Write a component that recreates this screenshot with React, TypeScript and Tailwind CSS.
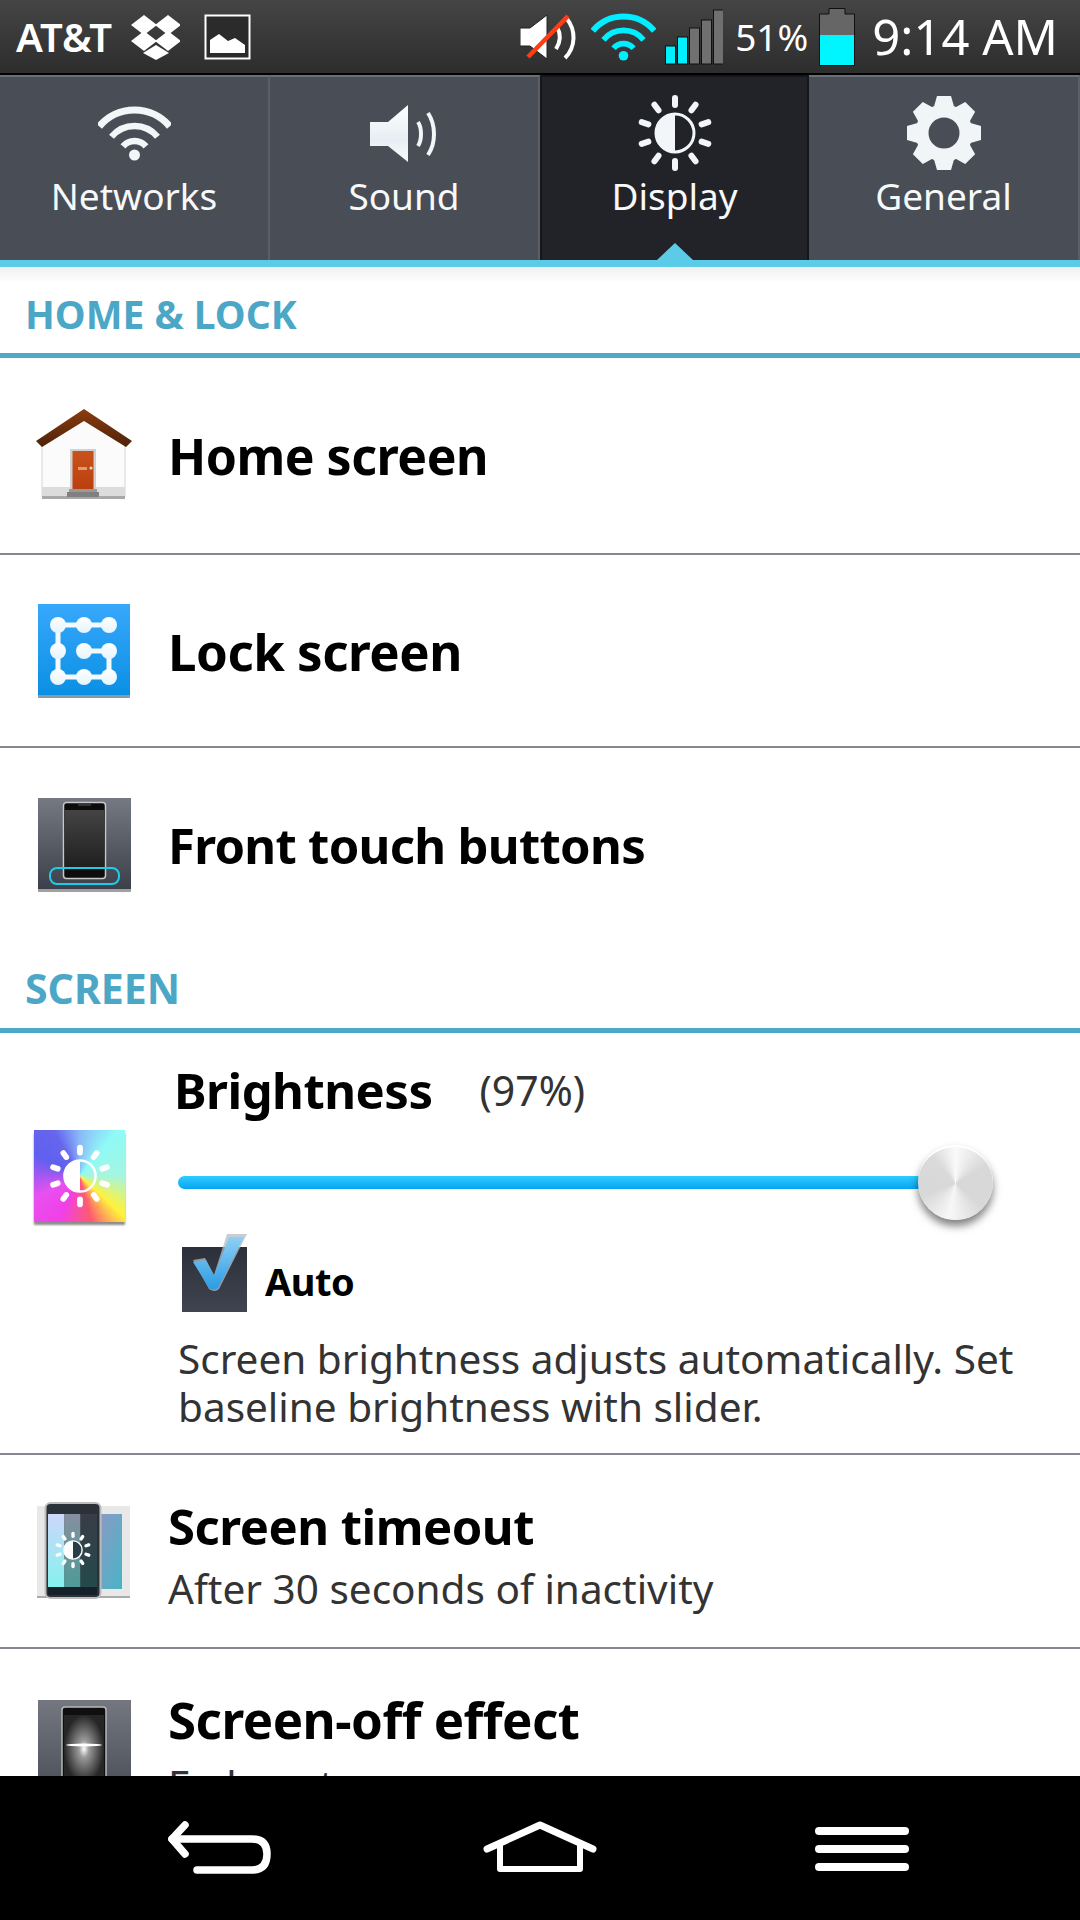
import React from "react";

const arc = (cx: number, cy: number, r: number, a = 42) => {
  const t = (a * Math.PI) / 180;
  const dx = r * Math.sin(t);
  const dy = r * Math.cos(t);
  return `M${cx - dx} ${cy - dy}A${r} ${r} 0 0 1 ${cx + dx} ${cy - dy}`;
};

function Wifi({ w, h, color }: { w: number; h: number; color: string }) {
  return (
    <svg width={w} height={h} viewBox="0 0 73 55" fill="none" stroke={color}>
      <path d={arc(36.5, 50, 46, 50)} strokeWidth={7} />
      <path d={arc(36.5, 50, 30, 50)} strokeWidth={6.5} />
      <path d={arc(36.5, 50, 15, 50)} strokeWidth={6.5} />
      <circle cx={36.5} cy={49} r={5.5} fill={color} stroke="none" />
    </svg>
  );
}

function SunGlyph({ fill, inner, ray = 13, stroke = 3 }: { fill: string; inner: string; ray?: number; stroke?: number }) {
  const rays = Array.from({ length: 10 }, (_, i) => i * 36);
  return (
    <g>
      {rays.map((a) => (
        <rect key={a} x={-stroke} y={-38} width={stroke * 2} height={ray} rx={stroke} fill={fill} transform={`rotate(${a})`} />
      ))}
      <circle r={19} fill={inner} stroke={fill} strokeWidth={3} />
      <path d="M0 -19A19 19 0 0 0 0 19Z" fill={fill} />
    </g>
  );
}

function TabSun() {
  return (
    <svg width={78} height={78} viewBox="-39 -39 78 78">
      <SunGlyph fill="#f2f6f8" inner="#212329" />
    </svg>
  );
}

function TabGear() {
  const teeth = Array.from({ length: 8 }, (_, i) => i * 45);
  return (
    <svg width={74} height={74} viewBox="-37 -37 74 74">
      <g fill="#f1f5f8">
        {teeth.map((a) => (
          <path key={a} d="M-7 -37H7L11 -23H-11Z" transform={`rotate(${a})`} />
        ))}
        <circle r={22} fill="none" stroke="#f1f5f8" strokeWidth={13} />
      </g>
    </svg>
  );
}

function TabSpeaker() {
  return (
    <svg width={68} height={57} viewBox="0 0 68 57" fill="none">
      <defs>
        <linearGradient id="spk" x1="0" y1="0" x2="0" y2="1">
          <stop offset="0" stopColor="#ffffff" />
          <stop offset="0.6" stopColor="#e6eef3" />
          <stop offset="1" stopColor="#f8fafb" />
        </linearGradient>
      </defs>
      <path d="M0 17H18L38 0V57L18 41H0Z" fill="url(#spk)" />
      <path d="M48 17C52 23 52 35 48 41" stroke="#f2f6f8" strokeWidth={4} />
      <path d="M58 8C66 20 66 38 58 50" stroke="#f2f6f8" strokeWidth={4} />
    </svg>
  );
}

function Dropbox() {
  const d = (x: number, y: number) => `${x},${y - 10} ${x + 13},${y} ${x},${y + 10} ${x - 13},${y}`;
  return (
    <svg width={49} height={46} viewBox="0 0 49 46" fill="#fff">
      <polygon points={d(13, 11)} />
      <polygon points={d(37, 11)} />
      <polygon points={d(13, 27)} />
      <polygon points={d(37, 27)} />
      <polygon points="25,31 38,39 25,46 12,39" />
    </svg>
  );
}

function Picture() {
  return (
    <svg width={47} height={46} viewBox="0 0 47 46">
      <rect x={1.5} y={1.5} width={44} height={43} fill="#2b2b2b" stroke="#fff" strokeWidth={2} />
      <path d="M6 39V26L15 20L24 27L31 24L41 31V39Z" fill="#fff" />
    </svg>
  );
}

function MutedSpeaker() {
  return (
    <svg width={58} height={48} viewBox="0 0 58 48" fill="none">
      <path d="M0 15H10L27 2V46L10 33H0Z" fill="#fff" stroke="#222" />
      <path d="M37 14C41 21 41 28 36 36" stroke="#fff" strokeWidth={4} />
      <path d="M47 6C56 17 56 34 45 45" stroke="#fff" strokeWidth={4} />
      <path d="M8 44L48 3" stroke="#ff3d14" strokeWidth={4.5} />
    </svg>
  );
}

function Signal() {
  const bars = [
    { x: 0, y: 37, c: "#00f0ff" },
    { x: 12, y: 28, c: "#00f0ff" },
    { x: 24, y: 19, c: "#707070" },
    { x: 36, y: 11, c: "#707070" },
    { x: 48, y: 1, c: "#707070" },
  ];
  return (
    <svg width={58} height={56} viewBox="0 0 58 56">
      {bars.map((b) => (
        <rect key={b.x} x={b.x + 0.5} y={b.y} width={10} height={55 - b.y} fill={b.c} stroke="#111" />
      ))}
    </svg>
  );
}

function Battery() {
  return (
    <svg width={36} height={58} viewBox="0 0 36 58">
      <path d="M10 .5H26V6H35.5V57.5H.5V6H10Z" fill="#666" stroke="#111" />
      <rect x={1} y={27} width={34} height={30} fill="#00f6ff" />
    </svg>
  );
}

function HomeIcon() {
  return (
    <svg width={96} height={90} viewBox="0 0 96 90" className="mb-[4px]">
      <defs>
        <linearGradient id="roof" x1="0" y1="0" x2="0" y2="1">
          <stop offset="0" stopColor="#8a3d10" />
          <stop offset="1" stopColor="#4d2208" />
        </linearGradient>
        <linearGradient id="door" x1="0" y1="0" x2="0" y2="1">
          <stop offset="0" stopColor="#c9521b" />
          <stop offset="1" stopColor="#bb3f0e" />
        </linearGradient>
      </defs>
      <path d="M6 34L48 8L89 34V88H6Z" fill="#fbfbfb" stroke="#d5d5d5" />
      <rect x={6} y={78} width={83} height={10} fill="#dcdcdc" />
      <rect x={6} y={87} width={83} height={3} fill="#a8a8a8" />
      <path d="M0 32L48 0L96 32L90 38L48 12L6 38Z" fill="url(#roof)" />
      <rect x={34} y={40} width={26} height={43} fill="#d0d0d0" />
      <rect x={36.5} y={42} width={21} height={38} fill="url(#door)" />
      <rect x={42} y={58} width={9} height={3} fill="#dca070" />
      <circle cx={55} cy={59} r={1.5} fill="#ddd" />
      <rect x={33} y={80} width={28} height={3} fill="#999" />
      <rect x={31} y={83} width={32} height={5} fill="#808080" />
    </svg>
  );
}

function LockIcon() {
  const pts = [
    [20, 21], [46, 21], [71, 21],
    [20, 47], [46, 47], [71, 47],
    [20, 73], [46, 73], [71, 73],
  ];
  return (
    <svg width={92} height={94} viewBox="0 0 92 94">
      <defs>
        <linearGradient id="lockBg" x1="0" y1="0" x2="0" y2="1">
          <stop offset="0" stopColor="#38a8fb" />
          <stop offset="1" stopColor="#0a8fe4" />
        </linearGradient>
        <linearGradient id="lockDot" x1="0" y1="0" x2="0" y2="1">
          <stop offset="0" stopColor="#ffffff" />
          <stop offset="1" stopColor="#e4f4fd" />
        </linearGradient>
      </defs>
      <rect width={92} height={92} fill="url(#lockBg)" />
      <rect y={91} width={92} height={3} fill="#8a9aa5" />
      <path d="M71 21H20V73H71V47H46" fill="none" stroke="#f2fafe" strokeWidth={5} />
      {pts.map(([x, y]) => (
        <circle key={`${x}-${y}`} cx={x} cy={y} r={8} fill="url(#lockDot)" />
      ))}
    </svg>
  );
}

function FrontIcon() {
  return (
    <svg width={93} height={94} viewBox="0 0 93 94">
      <defs>
        <linearGradient id="frontBg" x1="0" y1="0" x2="0" y2="1">
          <stop offset="0" stopColor="#757982" />
          <stop offset="1" stopColor="#3b3f49" />
        </linearGradient>
        <linearGradient id="frontScreen" x1="0" y1="0" x2="0" y2="1">
          <stop offset="0" stopColor="#444" />
          <stop offset="1" stopColor="#1f1f1f" />
        </linearGradient>
      </defs>
      <rect width={93} height={92} fill="url(#frontBg)" />
      <rect y={91} width={93} height={3} fill="#a0a0a0" />
      <rect x={25.5} y={4.5} width={42} height={76} rx={3} fill="#0c0c0c" stroke="#c8c8c8" strokeWidth={1.5} />
      <rect x={27} y={12} width={39} height={58} fill="url(#frontScreen)" />
      <rect x={40} y={6} width={13} height={2} fill="#333" />
      <rect x={12} y={70} width={69} height={16} rx={7} fill="none" stroke="#1fcbea" strokeWidth={2} />
    </svg>
  );
}

function BrightIcon() {
  return (
    <div className="flex h-[92px] w-[91px] items-center justify-center bg-[conic-gradient(#8ab8f8_0deg,#8ffaf6_40deg,#a5f5e0_90deg,#fff23c_132deg,#ff5a70_165deg,#f040e8_205deg,#e850f0_245deg,#6060f0_295deg,#6565ee_330deg,#8ab8f8_360deg)] shadow-[0_3px_2px_rgba(0,0,0,0.45)]">
      <svg width={64} height={66} viewBox="-39 -39 78 78">
        <SunGlyph fill="#ffffff" inner="transparent" ray={13} stroke={3.5} />
      </svg>
    </div>
  );
}

function CheckIcon() {
  return (
    <svg width={66} height={80} viewBox="0 0 66 80">
      <defs>
        <linearGradient id="boxBg" x1="0" y1="0" x2="0" y2="1">
          <stop offset="0" stopColor="#2c303a" />
          <stop offset="1" stopColor="#3f4450" />
        </linearGradient>
        <linearGradient id="chk" x1="0" y1="0" x2="0" y2="1">
          <stop offset="0" stopColor="#8fd0f4" />
          <stop offset="1" stopColor="#2b9be4" />
        </linearGradient>
      </defs>
      <rect y={13} width={65} height={65} fill="url(#boxBg)" />
      <path d="M44 1H64L36 56Q32 60 26 56L10 27L22 25L31 42Z" fill="#b5bcc4" opacity={0.75} transform="translate(1 -1)" />
      <path d="M47 3H62L36 54Q32 57 27 54L11 28L24 26L32 42Z" fill="url(#chk)" />
    </svg>
  );
}

function TimeoutIcon() {
  return (
    <svg width={96} height={98} viewBox="0 0 96 98">
      <defs>
        <linearGradient id="sideShot" x1="0" y1="0" x2="1" y2="1">
          <stop offset="0" stopColor="#8f98c4" />
          <stop offset="1" stopColor="#47b5c4" />
        </linearGradient>
        <linearGradient id="col1" x1="0" y1="0" x2="0" y2="1">
          <stop offset="0" stopColor="#cdd6fa" />
          <stop offset="1" stopColor="#85f2ee" />
        </linearGradient>
        <linearGradient id="col2" x1="0" y1="0" x2="0" y2="1">
          <stop offset="0" stopColor="#858fa0" />
          <stop offset="1" stopColor="#4f9a98" />
        </linearGradient>
        <linearGradient id="col3" x1="0" y1="0" x2="0" y2="1">
          <stop offset="0" stopColor="#383c47" />
          <stop offset="1" stopColor="#244a4c" />
        </linearGradient>
      </defs>
      <rect y={4} width={93} height={91} fill="#e8e8e8" />
      <rect y={94} width={93} height={2} fill="#aaa" />
      <rect x={60} y={12} width={25} height={75} fill="url(#sideShot)" />
      <rect x={8.5} y={1} width={55} height={95} rx={5} fill="#2b3138" stroke="#bdbdbd" strokeWidth={2} />
      <rect x={11} y={12} width={16.5} height={73} fill="url(#col1)" />
      <rect x={27.5} y={12} width={16} height={73} fill="url(#col2)" />
      <rect x={43.5} y={12} width={16.5} height={73} fill="url(#col3)" />
      <rect x={11} y={85} width={49} height={8} fill="#15202a" />
      <g transform="translate(36 48) scale(0.48)">
        <SunGlyph fill="#ffffff" inner="#2a3c46" ray={13} stroke={3.5} />
      </g>
    </svg>
  );
}

function ScreenOffIcon() {
  return (
    <svg width={93} height={94} viewBox="0 0 93 94" className="self-start">
      <defs>
        <linearGradient id="offBg" x1="0" y1="0" x2="0" y2="1">
          <stop offset="0" stopColor="#74777f" />
          <stop offset="1" stopColor="#4a4e58" />
        </linearGradient>
        <radialGradient id="glow" cx="0.5" cy="0.5" r="0.5">
          <stop offset="0" stopColor="#ffffff" />
          <stop offset="0.25" stopColor="#9a9a9a" />
          <stop offset="1" stopColor="#262626" />
        </radialGradient>
      </defs>
      <rect width={93} height={94} fill="url(#offBg)" />
      <rect x={24} y={7} width={44} height={87} rx={3} fill="#0f0f0f" stroke="#b8b8b8" strokeWidth={1.5} />
      <rect x={26} y={15} width={40} height={68} fill="url(#glow)" />
      <ellipse cx={46} cy={45} rx={18} ry={1.5} fill="#fff" />
    </svg>
  );
}

function BackIcon() {
  return (
    <svg width={104} height={54} viewBox="0 0 104 54" fill="none" stroke="#fff" strokeWidth={7.5} strokeLinecap="round" strokeLinejoin="round">
      <path d="M17 4L4 18L17 33" />
      <path d="M4 18H84Q99 18 99 33Q99 49 84 49H29" />
    </svg>
  );
}

function NavHome() {
  return (
    <svg width={114} height={52} viewBox="0 0 114 52" fill="none" stroke="#fff" strokeLinecap="round" strokeLinejoin="round">
      <path d="M4 28L57 4L110 28" strokeWidth={7} />
      <path d="M17 24V48H97V24" strokeWidth={6} />
    </svg>
  );
}

type TabProps = { label: string; icon: React.ReactNode; active?: boolean };

function Tab({ label, icon, active }: TabProps) {
  return (
    <div
      className={
        active
          ? "relative flex flex-col items-center bg-[#212329] border-x-2 border-x-[#15161a] border-t-2 border-t-[#15161a]"
          : "relative flex flex-col items-center bg-[#484d56] border-r-2 border-r-[#5a5e67] border-t-2 border-t-[#6a6e76]"
      }
    >
      <div className="flex h-[96px] w-full items-center justify-center pt-[16px]">{icon}</div>
      <span className="text-[37px] leading-[46px] text-[#f7f8f9]">{label}</span>
      {active && (
        <svg width={36} height={17} viewBox="0 0 36 17" className="absolute bottom-0 left-1/2 -translate-x-1/2">
          <path d="M18 0L36 17H0Z" fill="#5ccbe7" />
        </svg>
      )}
    </div>
  );
}

function SectionHeader({ title, className, textClass }: { title: string; className: string; textClass: string }) {
  return (
    <div className={`flex flex-col justify-end ${className}`}>
      <div className={`pl-[25px] font-bold leading-[46px] text-[#4ca7c7] ${textClass}`}>{title}</div>
      <div className="h-[5px] bg-[#4ea8c8]" />
    </div>
  );
}

function Row({ icon, title, className, textClass }: { icon: React.ReactNode; title: string; className: string; textClass: string }) {
  return (
    <div className={`flex items-center ${className}`}>
      <div className="flex w-[168px] justify-center">{icon}</div>
      <span className={`font-bold leading-[60px] text-black ${textClass}`}>{title}</span>
    </div>
  );
}

export default function App() {
  return (
    <div className="flex h-[1920px] w-[1080px] flex-col overflow-hidden bg-white font-['Noto_Sans',sans-serif]">
      {/* Status bar */}
      <div className="flex h-[75px] flex-none items-start border-b-2 border-b-black bg-gradient-to-b from-[#454545] to-[#2d2d2d]">
        <div className="flex h-[73px] w-full items-center pl-[16px] pr-[22px]">
          <span className="text-[40px] font-semibold leading-none text-white">AT&amp;T</span>
          <div className="ml-[19px]"><Dropbox /></div>
          <div className="ml-[24px]"><Picture /></div>
          <div className="ml-auto"><MutedSpeaker /></div>
          <div className="ml-[13px]"><Wifi w={65} h={48} color="#00eeff" /></div>
          <div className="ml-[9px]"><Signal /></div>
          <span className="ml-[12px] text-[37px] leading-none text-white">51%</span>
          <div className="ml-[11px]"><Battery /></div>
          <span className="ml-[17px] text-[49px] leading-none text-white">9:14 AM</span>
        </div>
      </div>

      {/* Tabs */}
      <div className="grid h-[185px] flex-none grid-cols-[270px_270px_269px_271px]">
        <Tab label="Networks" icon={<Wifi w={73} h={55} color="#f2f6f8" />} />
        <Tab label="Sound" icon={<TabSpeaker />} />
        <Tab label="Display" icon={<TabSun />} active />
        <Tab label="General" icon={<TabGear />} />
      </div>
      <div className="h-[7px] flex-none bg-[#5ccbe7]" />

      {/* Content */}
      <div className="min-h-0 flex-1 overflow-hidden bg-gradient-to-b from-[#f0f0f0] to-white to-[16px]">
        <SectionHeader title="HOME & LOCK" className="h-[91px]" textClass="pb-[16px] text-[39px]" />
        <Row icon={<HomeIcon />} title="Home screen" className="h-[197px] border-b-2 border-b-[#858891]" textClass="text-[50px] tracking-[-0.5px]" />
        <Row icon={<LockIcon />} title="Lock screen" className="h-[193px] border-b-2 border-b-[#858891]" textClass="text-[51px] tracking-[-0.5px]" />
        <Row icon={<FrontIcon />} title="Front touch buttons" className="h-[193px]" textClass="text-[49px] tracking-[-0.7px]" />
        <SectionHeader title="SCREEN" className="h-[92px]" textClass="pb-[17px] text-[41px]" />

        {/* Brightness */}
        <div className="flex h-[422px] border-b-2 border-b-[#858891]">
          <div className="flex w-[174px] flex-none justify-start pl-[34px] pt-[97px]">
            <BrightIcon />
          </div>
          <div className="flex min-w-0 flex-1 flex-col">
            <div className="mt-[27px] flex items-center">
              <span className="text-[49px] font-bold leading-[60px] tracking-[-0.5px] text-black">Brightness</span>
              <span className="ml-[47px] text-[41px] leading-[60px] text-[#333]">(97%)</span>
            </div>
            <div className="ml-[4px] mt-[25px] flex items-center">
              <div className="h-[13px] w-[746px] rounded-full bg-gradient-to-b from-[#2dcbff] to-[#05a5f2]" />
              <div className="ml-[-6px] h-[75px] w-[75px] rounded-full border-t-2 border-t-white bg-[conic-gradient(#fafafa_0deg,#d8d8d8_60deg,#d8d8d8_130deg,#f7f7f7_190deg,#d8d8d8_250deg,#dadada_320deg,#fafafa_360deg)] shadow-[0_6px_8px_rgba(0,0,0,0.5)]" />
            </div>
            <div className="ml-[8px] mt-[14px] flex items-end">
              <CheckIcon />
              <span className="mb-[10px] ml-[17px] text-[38px] font-bold leading-[46px] tracking-[-0.5px] text-black">Auto</span>
            </div>
            <div className="ml-[4px] mt-[21px] w-[880px] text-[40.5px] leading-[48px] text-[#333]">
              Screen brightness adjusts automatically. Set baseline brightness with slider.
            </div>
          </div>
        </div>

        {/* Screen timeout */}
        <div className="flex h-[194px] items-center border-b-2 border-b-[#858891]">
          <div className="flex w-[168px] flex-none justify-start pl-[37px]"><TimeoutIcon /></div>
          <div className="flex flex-col pt-[6px]">
            <span className="text-[49px] font-bold leading-[60px] tracking-[-0.5px] text-black">Screen timeout</span>
            <span className="mt-[10px] text-[40.5px] leading-[46px] text-[#333]">After 30 seconds of inactivity</span>
          </div>
        </div>

        {/* Screen-off */}
        <div className="flex h-[194px] items-start pt-[40px]">
          <div className="flex w-[168px] flex-none justify-start pl-[38px] pt-[11px]"><ScreenOffIcon /></div>
          <div className="flex flex-col">
            <span className="text-[51px] font-bold leading-[60px] tracking-[-0.5px] text-black">Screen-off effect</span>
            <span className="mt-[13px] text-[40.5px] leading-[46px] text-[#333]">Fade out</span>
          </div>
        </div>
      </div>

      {/* Navigation bar */}
      <div className="flex h-[144px] flex-none items-start bg-black pl-[168px] pt-[45px]">
        <BackIcon />
        <div className="ml-[211px]"><NavHome /></div>
        <div className="ml-[218px] mt-[6px] flex w-[94px] flex-col gap-[10px]">
          <div className="h-[8px] rounded-full bg-white" />
          <div className="h-[8px] rounded-full bg-white" />
          <div className="h-[8px] rounded-full bg-white" />
        </div>
      </div>
    </div>
  );
}
